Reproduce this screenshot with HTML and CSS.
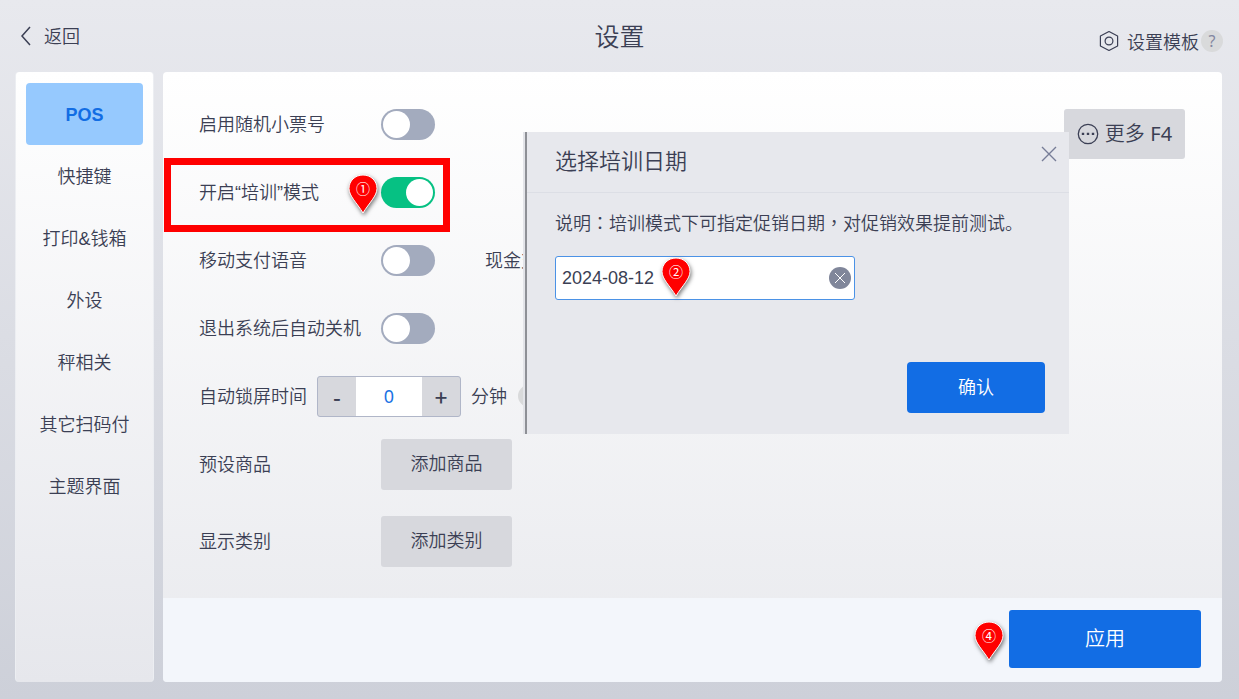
FILE: index.html
```html
<!DOCTYPE html>
<html lang="zh-CN">
<head>
<meta charset="utf-8">
<title>设置</title>
<link rel="stylesheet" href="styles.css">
</head>
<body>
<header class="topbar">
  <button class="back" type="button">
    <svg width="12" height="20" viewBox="0 0 12 20" fill="none" stroke="currentColor" stroke-width="1.5"><path d="M10 1 2 10l8 9"/></svg>
    <span class="text">返回</span>
  </button>
  <h1 class="title">设置</h1>
  <div class="template">
    <button class="template-btn" type="button">
      <svg width="20" height="22" viewBox="0 0 20 22" fill="none" stroke="currentColor" stroke-width="1.2"><path d="M10 1.500 18.600 6v10L10 20.500 1.400 16V6z" stroke-linejoin="round"/><circle cx="10" cy="11" r="3.900"/></svg>
      <span class="text">设置模板</span>
    </button>
    <button class="help" type="button">?</button>
  </div>
</header>

<main class="layout">
  <nav class="sidebar">
    <button class="nav-item active" type="button">POS</button>
    <button class="nav-item" type="button">快捷键</button>
    <button class="nav-item" type="button">打印&amp;钱箱</button>
    <button class="nav-item" type="button">外设</button>
    <button class="nav-item" type="button">秤相关</button>
    <button class="nav-item" type="button">其它扫码付</button>
    <button class="nav-item" type="button">主题界面</button>
  </nav>

  <section class="panel">
    <div class="content">
      <div class="settings">
        <div class="row">
          <label class="label" for="random">启用随机小票号</label>
          <input class="toggle" id="random" type="checkbox">
        </div>
        <div class="row">
          <label class="label" for="training">开启“培训”模式</label>
          <input class="toggle" id="training" type="checkbox" checked>
          <div class="highlight"></div>
          <div class="pin pin-one">
            <svg class="pin-shape" width="30" height="40" viewBox="0 0 30 40"><path d="M15 1C7 1 1 7 1 14.500 1 22 9 29 15 39c6-10 14-17 14-24.500C29 7 23 1 15 1z" fill="#f00" stroke="#fff"/></svg>
            <span class="pin-number">①</span>
          </div>
        </div>
        <div class="row">
          <label class="label" for="voice">移动支付语音</label>
          <input class="toggle" id="voice" type="checkbox">
          <span class="second-label">现金支</span>
        </div>
        <div class="row">
          <label class="label" for="shutdown">退出系统后自动关机</label>
          <input class="toggle" id="shutdown" type="checkbox">
        </div>
        <div class="row row-inline">
          <label class="text" for="lock">自动锁屏时间</label>
          <div class="stepper">
            <button class="step" type="button">-</button>
            <input class="step-value" id="lock" type="text" value="0">
            <button class="step" type="button">+</button>
          </div>
          <span class="text">分钟</span>
          <span class="help"></span>
        </div>
        <div class="row row-action">
          <span class="label">预设商品</span>
          <button class="action" type="button">添加商品</button>
        </div>
        <div class="row row-action row-last">
          <span class="label">显示类别</span>
          <button class="action" type="button">添加类别</button>
        </div>
      </div>
      <button class="more" type="button">
        <svg width="22" height="22" viewBox="0 0 22 22"><circle cx="11" cy="11" r="9.700" fill="none" stroke="currentColor" stroke-width="1.300"/><path d="M4.800 9.800h2.400v2.200H4.800zM9.800 9.800h2.400v2.200H9.800zM14.800 9.800h2.400v2.200h-2.400z" fill="currentColor"/></svg>
        <span>更多 <span class="key">F4</span></span>
      </button>
    </div>

    <footer class="footer">
      <div class="pin">
        <svg class="pin-shape" width="30" height="40" viewBox="0 0 30 40"><path d="M15 1C7 1 1 7 1 14.500 1 22 9 29 15 39c6-10 14-17 14-24.500C29 7 23 1 15 1z" fill="#f00" stroke="#fff"/></svg>
        <span class="pin-number">④</span>
      </div>
      <button class="apply" type="button">应用</button>
    </footer>

    <div class="dialog" role="dialog" aria-labelledby="dialog-title">
      <div class="dialog-head">
        <h2 class="dialog-title" id="dialog-title">选择培训日期</h2>
        <button class="close" type="button">
          <svg width="16" height="16" viewBox="0 0 16 16" fill="none" stroke="currentColor" stroke-width="1.400"><path d="m1 1 14 14M15 1 1 15"/></svg>
        </button>
      </div>
      <div class="dialog-body">
        <label class="note" for="date">说明<span class="punct" lang="zh-Hant">：</span>培训模式下可指定促销日期<span class="punct" lang="zh-Hant">，</span>对促销效果提前测试。</label>
        <div class="date-field">
          <input class="date-input" id="date" type="text" value="2024-08-12">
          <button class="clear" type="button">
            <svg width="22" height="22" viewBox="0 0 22 22"><circle cx="11" cy="11" r="11" fill="#80869a"/><path d="m6 6 10 10M16 6 6 16" fill="none" stroke="#fff" stroke-width="1"/></svg>
          </button>
          <div class="pin pin-two">
            <svg class="pin-shape" width="30" height="40" viewBox="0 0 30 40"><path d="M15 1C7 1 1 7 1 14.500 1 22 9 29 15 39c6-10 14-17 14-24.500C29 7 23 1 15 1z" fill="#f00" stroke="#fff"/></svg>
            <span class="pin-number">②</span>
          </div>
        </div>
        <button class="confirm" type="button">确认</button>
      </div>
    </div>
  </section>
</main>
</body>
</html>
```
FILE: styles.css
```css
* {
  box-sizing: border-box;
}

body {
  margin: 0;
  min-height: 100vh;
  display: flex;
  flex-direction: column;
  background: linear-gradient(#e8e9ee, #cdd0d9);
  color: #3b3f54;
  font: 350 18px/26px "Liberation Sans", "Noto Sans CJK SC", sans-serif;
}

button,
input {
  margin: 0;
  padding: 0;
  border: 0;
  background: none;
  color: inherit;
  font: inherit;
}

svg {
  display: block;
}

.topbar {
  display: grid;
  grid-template-columns: 1fr auto 1fr;
  align-items: center;
  height: 72px;
  padding: 0 16px;
}

.text,
.label {
  padding-top: 2px;
}

.back,
.template,
.template-btn {
  display: flex;
  align-items: center;
}

.back {
  justify-self: start;
  gap: 12px;
  padding-left: 4px;
}

.title {
  margin: 0;
  padding-top: 2px;
  font-size: 25px;
  font-weight: 350;
  line-height: 36px;
}

.template {
  justify-self: end;
  gap: 2px;
  padding-top: 10px;
}

.template-btn {
  gap: 8px;
}

.template .text {
  padding-top: 4px;
}

.help {
  width: 22px;
  height: 22px;
  flex: none;
  border-radius: 50%;
  background: #d9dadb;
  color: #8387a0;
  font: 16px/20px "Noto Sans", sans-serif;
}

.layout {
  flex: 1;
  display: flex;
  gap: 9px;
  padding: 0 17px 17px 15px;
}

.sidebar {
  width: 139px;
  flex: none;
  padding: 11px 10px;
  border: 1px solid #eceef2;
  border-width: 0 1px;
  border-radius: 4px;
  background: linear-gradient(#fff, #e6e7ec);
}

.nav-item {
  display: block;
  width: 100%;
  height: 62px;
  padding-top: 2px;
  border-radius: 4px;
  white-space: nowrap;
}

.nav-item.active {
  background: #96c9fe;
  color: #126de4;
  font-weight: bold;
}

.panel {
  position: relative;
  flex: 1;
  display: flex;
  flex-direction: column;
  border-radius: 4px;
  background: linear-gradient(#fff, #e9eaee 600px);
}

.content {
  flex: 1;
  display: flex;
  justify-content: space-between;
  align-items: flex-start;
  padding: 18px 37px 10px 36px;
}

.row {
  position: relative;
  display: flex;
  align-items: center;
  height: 68px;
}

.row-inline {
  gap: 10px;
}

.row-inline .help {
  margin-left: 1px;
}

.row-last {
  height: 86px;
}

.label {
  width: 182px;
}

.second-label {
  margin-left: 50px;
  padding-top: 2px;
}

.toggle {
  appearance: none;
  width: 54px;
  height: 31px;
  padding: 2px;
  border-radius: 16px;
  background: #a3abbe;
}

.toggle::before {
  content: "";
  display: block;
  width: 27px;
  height: 27px;
  border-radius: 50%;
  background: #fff;
}

.toggle:checked {
  background: #06c183;
}

.toggle:checked::before {
  margin-left: auto;
}

.stepper {
  display: flex;
  width: 144px;
  height: 41px;
  border: 1px solid #b0b6c8;
  border-radius: 3px;
  background: #d7d8dd;
}

.step {
  flex: 1;
  font: 500 22px/32px "Noto Sans CJK SC", sans-serif;
}

.step-value {
  width: 66px;
  background: #fff;
  color: #1a73e4;
  font: 18px/26px "Noto Sans", sans-serif;
  text-align: center;
}

.action {
  width: 131px;
  height: 51px;
  border-radius: 3px;
  background: #d7d8dd;
}

.more {
  display: flex;
  align-items: center;
  justify-content: center;
  gap: 6px;
  width: 121px;
  height: 50px;
  margin-top: 19px;
  border-radius: 3px;
  background: #d7d8dd;
  font-size: 20px;
}

.key {
  font-family: "Noto Sans", sans-serif;
  font-weight: 400;
}

.footer {
  display: flex;
  justify-content: flex-end;
  align-items: center;
  gap: 5px;
  height: 84px;
  padding: 0 21px 2px;
  border-radius: 0 0 4px 4px;
  background: #f3f6fb;
}

.footer .pin {
  margin-top: 4px;
}

.apply {
  width: 192px;
  height: 58px;
  border-radius: 3px;
  background: #126de4;
  color: #fff;
  font-size: 20px;
}

/* Annotation markers laid over the controls */
.highlight {
  position: absolute;
  left: -35px;
  top: 0;
  width: 286px;
  height: 74px;
  border: 7px solid #f00;
}

.pin {
  position: relative;
  width: 30px;
  height: 40px;
}

.pin-shape {
  filter: drop-shadow(1px 2px 2px #0008);
}

.pin-number {
  position: absolute;
  inset: 4px 0 auto;
  color: #fff;
  font: 14px/20px "Noto Sans CJK SC", sans-serif;
  text-align: center;
}

.pin-one {
  position: absolute;
  left: 149px;
  top: 16px;
}

.pin-two {
  position: absolute;
  left: 105px;
  top: 0;
}

.dialog {
  position: absolute;
  left: 360px;
  top: 60px;
  width: 546px;
  height: 302px;
  display: flex;
  flex-direction: column;
  border-left: 2px solid #e3e4e9;
  background: #e7e8ed;
  box-shadow: inset 2px 0 #8e9096;
}

.dialog-head {
  display: flex;
  justify-content: space-between;
  align-items: center;
  height: 61px;
  margin-left: 2px;
  padding: 0 12px 0 28px;
  border-bottom: 1px solid #dcdee5;
}

.dialog-title {
  margin: 0;
  font-size: 22px;
  font-weight: 350;
  line-height: 30px;
}

.close {
  padding-bottom: 16px;
  color: #777d97;
}

.dialog-body {
  flex: 1;
  display: flex;
  flex-direction: column;
  padding: 18px 24px 21px 30px;
}

.note {
  margin-bottom: 19px;
  white-space: nowrap;
}

.punct {
  font-family: "Noto Sans CJK SC", sans-serif;
  line-height: 1;
}

.date-field {
  position: relative;
  display: flex;
  align-items: center;
  width: 300px;
  height: 44px;
  padding: 0 3px 0 6px;
  border: 1px solid #4b92e6;
  border-radius: 3px;
  background: #fff;
}

.date-input {
  flex: 1;
  min-width: 0;
}

.confirm {
  align-self: flex-end;
  width: 138px;
  height: 51px;
  margin-top: auto;
  border-radius: 4px;
  background: #126de4;
  color: #fff;
}
```
